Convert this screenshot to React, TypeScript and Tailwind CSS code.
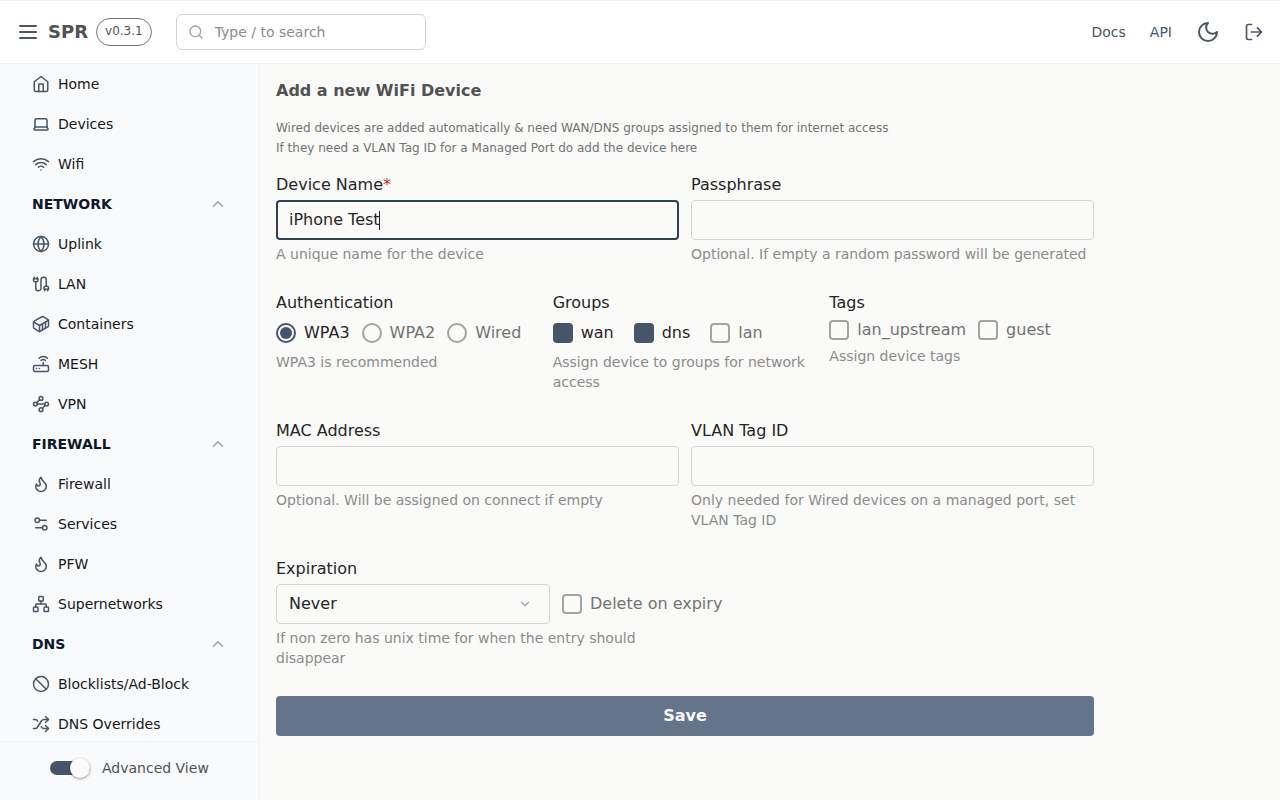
import { useState } from "react";
import type { ReactNode } from "react";
import {
  Ban,
  ChevronDown,
  ChevronUp,
  Container,
  Globe,
  Laptop,
  LogOut,
  Network,
  Router,
  Search,
  Settings2,
  Shuffle,
  Waypoints,
  Wifi,
} from "lucide-react";

type IconProps = { className?: string };

function Stroke({ className, children }: IconProps & { children: ReactNode }) {
  return (
    <svg
      viewBox="0 0 24 24"
      fill="none"
      stroke="currentColor"
      strokeWidth="2"
      strokeLinecap="round"
      strokeLinejoin="round"
      aria-hidden="true"
      className={className}
    >
      {children}
    </svg>
  );
}

const MenuIcon = ({ className }: IconProps) => (
  <Stroke className={className}>
    <path d="M4 6h16M4 12h16M4 18h16" />
  </Stroke>
);

const MoonIcon = ({ className }: IconProps) => (
  <Stroke className={className}>
    <path d="M12 3a6 6 0 0 0 9 9 9 9 0 1 1-9-9Z" />
  </Stroke>
);

const HomeIcon = ({ className }: IconProps) => (
  <Stroke className={className}>
    <path d="m3 9 9-7 9 7v11a2 2 0 0 1-2 2H5a2 2 0 0 1-2-2z" />
    <polyline points="9 22 9 12 15 12 15 22" />
  </Stroke>
);

const CableIcon = ({ className }: IconProps) => (
  <Stroke className={className}>
    <path d="M4 9a2 2 0 0 1-2-2V5h6v2a2 2 0 0 1-2 2Z" />
    <path d="M3 5V3M7 5V3" />
    <path d="M19 15V6.5a3.5 3.5 0 0 0-7 0v11a3.5 3.5 0 0 1-7 0V9" />
    <path d="M17 21v-2M21 21v-2" />
    <path d="M22 19h-6v-2a2 2 0 0 1 2-2h2a2 2 0 0 1 2 2Z" />
  </Stroke>
);

const FlameIcon = ({ className }: IconProps) => (
  <Stroke className={className}>
    <path d="M8.5 14.5A2.5 2.5 0 0 0 11 12c0-1.38-.5-2-1-3-1.072-2.143-.224-4.054 2-6 .5 2.5 2 4.9 4 6.5 2 1.6 3 3.5 3 5.5a7 7 0 1 1-14 0c0-1.153.433-2.294 1-3a2.5 2.5 0 0 0 2.5 2.5z" />
  </Stroke>
);

type NavItem = { label: string; icon: (props: IconProps) => ReactNode };
type NavSection = { title?: string; items: NavItem[] };

const sections: NavSection[] = [
  {
    items: [
      { label: "Home", icon: HomeIcon },
      { label: "Devices", icon: (p) => <Laptop {...p} /> },
      { label: "Wifi", icon: (p) => <Wifi {...p} /> },
    ],
  },
  {
    title: "NETWORK",
    items: [
      { label: "Uplink", icon: (p) => <Globe {...p} /> },
      { label: "LAN", icon: CableIcon },
      { label: "Containers", icon: (p) => <Container {...p} /> },
      { label: "MESH", icon: (p) => <Router {...p} /> },
      { label: "VPN", icon: (p) => <Waypoints {...p} /> },
    ],
  },
  {
    title: "FIREWALL",
    items: [
      { label: "Firewall", icon: FlameIcon },
      { label: "Services", icon: (p) => <Settings2 {...p} /> },
      { label: "PFW", icon: FlameIcon },
      { label: "Supernetworks", icon: (p) => <Network {...p} /> },
    ],
  },
  {
    title: "DNS",
    items: [
      { label: "Blocklists/Ad-Block", icon: (p) => <Ban {...p} /> },
      { label: "DNS Overrides", icon: (p) => <Shuffle {...p} /> },
    ],
  },
];

function Header() {
  return (
    <header className="flex h-16 shrink-0 items-center border-y border-[#f3f3f3] bg-white px-4 text-[#4b5563]">
      <button type="button" aria-label="Toggle menu">
        <MenuIcon className="size-6" />
      </button>
      <span className="ml-2 text-lg font-bold text-[#525252]">SPR</span>
      <button
        type="button"
        className="ml-2 flex h-7 items-center rounded-full border border-[#737373] px-2 pb-0.5 text-xs text-[#525252]"
      >
        v0.3.1
      </button>
      <label className="ml-6 flex h-9 w-[250px] items-center gap-[11px] rounded-md border border-[#d4d4d4] px-[11px]">
        <Search className="size-4 shrink-0 text-[#a3a3a3]" />
        <input
          type="search"
          aria-label="Search"
          placeholder="Type / to search"
          className="w-full bg-transparent text-sm outline-none placeholder:text-[#8c8c8c]"
        />
      </label>
      <nav className="ml-auto flex items-center gap-6 text-sm">
        <a href="#docs">Docs</a>
        <a href="#api">API</a>
        <button type="button" aria-label="Dark mode">
          <MoonIcon className="size-6" />
        </button>
        <button type="button" aria-label="Log out">
          <LogOut className="size-5" />
        </button>
      </nav>
    </header>
  );
}

function Sidebar() {
  return (
    <aside className="flex w-[260px] shrink-0 flex-col border-r border-[#f1f2f3] bg-[#f8fafc]">
      <nav className="min-h-0 flex-1 overflow-hidden px-8 text-sm text-[#171717]">
        {sections.map((section, i) => (
          <div key={section.title ?? i}>
            {section.title && (
              <button
                type="button"
                className="flex h-10 w-full items-center justify-between font-bold text-[#0f172a]"
              >
                {section.title}
                <ChevronUp className="size-[18px] text-[#9ca3af]" />
              </button>
            )}
            <ul>
              {section.items.map(({ label, icon: Icon }) => (
                <li key={label}>
                  <a href="#page" className="flex h-10 items-center gap-2">
                    <Icon className="size-[18px] text-[#4b5563]" />
                    {label}
                  </a>
                </li>
              ))}
            </ul>
          </div>
        ))}
      </nav>
      <div className="h-[59px] shrink-0 border-t border-[#f1f2f3] pt-4 pl-[50px]">
        <label className="flex h-5 items-center gap-3 text-sm text-[#525252]">
          <span className="relative flex h-5 w-10 items-center">
            <input
              type="checkbox"
              role="switch"
              defaultChecked
              className="peer h-3.5 w-full appearance-none rounded-full bg-[#d4d4d4] checked:bg-[#475569]"
            />
            <span className="pointer-events-none absolute left-0 size-5 rounded-full bg-[#fafafa] shadow-[0_1px_3px_rgba(0,0,0,0.4)] peer-checked:left-5" />
          </span>
          Advanced View
        </label>
      </div>
    </aside>
  );
}

function Label({ htmlFor, children }: { htmlFor: string; children: ReactNode }) {
  return (
    <label htmlFor={htmlFor} className="mb-1 block leading-[22px]">
      {children}
    </label>
  );
}

function Helper({ children }: { children: ReactNode }) {
  return <p className="mt-1 text-sm leading-5 text-[#8c8c8c]">{children}</p>;
}

type FieldProps = {
  id: string;
  label: string;
  helper: string;
  required?: boolean;
  type?: string;
  initial?: string;
  focused?: boolean;
};

function Field({ id, label, helper, required, type = "text", initial = "", focused }: FieldProps) {
  const [value, setValue] = useState(initial);
  return (
    <div>
      <Label htmlFor={id}>
        {label}
        {required && <span className="text-[#dc2626]">*</span>}
      </Label>
      <div className="relative">
        <input
          id={id}
          type={type}
          value={value}
          onChange={(e) => setValue(e.target.value)}
          autoFocus={focused}
          required={required}
          className="peer block h-10 w-full rounded border border-[#d4d4d4] bg-transparent px-3 pb-0.5 caret-transparent outline-none focus:border-2 focus:border-[#334155] focus:px-[11px]"
        />
        <span
          aria-hidden="true"
          className="pointer-events-none absolute inset-y-0 left-3 hidden items-center overflow-hidden peer-focus:flex"
        >
          <span className="h-[19px] border-r border-[#262626] leading-[19px] whitespace-pre text-transparent">
            {type === "password" ? "•".repeat(value.length) : value}
          </span>
        </span>
      </div>
      <Helper>{helper}</Helper>
    </div>
  );
}

function Check({ label, checked }: { label: string; checked?: boolean }) {
  return (
    <label className="flex items-center gap-2 leading-6 text-[#737373] has-checked:text-[#262626]">
      <input
        type="checkbox"
        defaultChecked={checked}
        className="size-5 shrink-0 appearance-none rounded border-2 border-[#a3a3a3] checked:border-[#475569] checked:bg-[#475569]"
      />
      {label}
    </label>
  );
}

function Radio({ label, checked }: { label: string; checked?: boolean }) {
  return (
    <label className="flex items-center gap-2 leading-6 text-[#737373] has-checked:text-[#262626]">
      <input
        type="radio"
        name="authentication"
        defaultChecked={checked}
        className="size-5 shrink-0 appearance-none rounded-full border-2 border-[#a3a3a3] bg-clip-content p-0.5 checked:border-[#475569] checked:bg-[#475569]"
      />
      {label}
    </label>
  );
}

function ChoiceGroup({
  title,
  helper,
  className,
  children,
}: {
  title: string;
  helper: string;
  className: string;
  children: ReactNode;
}) {
  return (
    <fieldset className="min-w-0">
      <legend className="mb-1 block leading-[22px]">{title}</legend>
      <div className={className}>{children}</div>
      <Helper>{helper}</Helper>
    </fieldset>
  );
}

function DeviceForm() {
  return (
    <form className="flex max-w-[818px] flex-col gap-7" onSubmit={(e) => e.preventDefault()}>
      <div className="grid grid-cols-2 gap-3">
        <Field
          id="device-name"
          label="Device Name"
          helper="A unique name for the device"
          initial="iPhone Test"
          required
          focused
        />
        <Field
          id="passphrase"
          type="password"
          label="Passphrase"
          helper="Optional. If empty a random password will be generated"
        />
      </div>

      <div className="grid grid-cols-3 gap-3">
        <ChoiceGroup
          title="Authentication"
          helper="WPA3 is recommended"
          className="flex gap-3 py-[3px]"
        >
          <Radio label="WPA3" checked />
          <Radio label="WPA2" />
          <Radio label="Wired" />
        </ChoiceGroup>
        <ChoiceGroup
          title="Groups"
          helper="Assign device to groups for network access"
          className="flex gap-5 py-[3px]"
        >
          <Check label="wan" checked />
          <Check label="dns" checked />
          <Check label="lan" />
        </ChoiceGroup>
        <ChoiceGroup title="Tags" helper="Assign device tags" className="flex gap-3">
          <Check label="lan_upstream" />
          <Check label="guest" />
        </ChoiceGroup>
      </div>

      <div className="grid grid-cols-2 gap-3">
        <Field id="mac" label="MAC Address" helper="Optional. Will be assigned on connect if empty" />
        <Field
          id="vlan"
          label="VLAN Tag ID"
          helper="Only needed for Wired devices on a managed port, set VLAN Tag ID"
        />
      </div>

      <div>
        <Label htmlFor="expiration">Expiration</Label>
        <div className="flex items-center gap-3">
          <div className="relative w-[274px]">
            <select
              id="expiration"
              className="block h-10 w-full appearance-none rounded border border-[#d4d4d4] bg-transparent px-3 outline-none"
            >
              <option>Never</option>
              <option>5 minutes</option>
              <option>1 hour</option>
              <option>1 day</option>
            </select>
            <ChevronDown className="pointer-events-none absolute top-[13px] right-[18px] size-3.5 text-[#94a3b8]" />
          </div>
          <Check label="Delete on expiry" />
        </div>
        <div className="w-1/2">
          <Helper>If non zero has unix time for when the entry should disappear</Helper>
        </div>
      </div>

      <button
        type="submit"
        className="h-10 rounded bg-[#64748b] font-bold text-[#fafafa]"
      >
        Save
      </button>
    </form>
  );
}

export default function App() {
  return (
    <div className="flex h-screen flex-col bg-[#fafaf9] font-['DejaVu_Sans',sans-serif] text-[#262626]">
      <Header />
      <div className="flex min-h-0 flex-1">
        <Sidebar />
        <main className="min-w-0 flex-1 overflow-auto p-4">
          <h1 className="leading-[22px] font-bold text-[#525252]">Add a new WiFi Device</h1>
          <div className="my-4 text-xs leading-5 text-[#737373]">
            <p>
              Wired devices are added automatically &amp; need WAN/DNS groups assigned to them for
              internet access
            </p>
            <p>If they need a VLAN Tag ID for a Managed Port do add the device here</p>
          </div>
          <DeviceForm />
        </main>
      </div>
    </div>
  );
}
